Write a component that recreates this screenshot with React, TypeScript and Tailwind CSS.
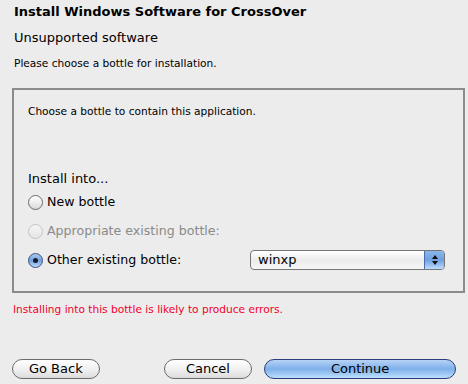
import React from "react";

function Radio({ checked, disabled }: { checked?: boolean; disabled?: boolean }) {
  return (
    <span
      className={
        "relative inline-flex h-[15px] w-[15px] shrink-0 items-center justify-center rounded-full border " +
        (disabled
          ? "border-[#c4c4c4] bg-gradient-to-b from-[#f6f6f6] to-[#e4e4e4]"
          : checked
          ? "border-[#3b4f80] bg-gradient-to-b from-[#a9c9ef] via-[#6fa3e0] to-[#b9d9f9]"
          : "border-[#6b6b6b] bg-gradient-to-b from-[#ffffff] via-[#eeeeee] to-[#d9d9d9]")
      }
    >
      {checked && <span className="h-[5px] w-[5px] rounded-full bg-[#1a1a2a]" />}
    </span>
  );
}

export default function App() {
  const font = { fontFamily: '"DejaVu Sans", "Liberation Sans", sans-serif' };
  return (
    <div className="h-[384px] w-[468px] overflow-hidden bg-[#ececec] text-black" style={font}>
      <div className="px-[14px] pt-[4px]">
        <div className="text-[13px] font-bold leading-[16px]">Install Windows Software for CrossOver</div>
        <div className="mt-[10px] text-[13px] leading-[16px]">Unsupported software</div>
        <div className="mt-[10px] text-[10.6px] leading-[14px]">Please choose a bottle for installation.</div>
      </div>
      <div className="ml-[12px] mt-[18px] h-[205px] w-[453px] border-2 border-[#8b8b8b] px-[14px]">
        <div className="mt-[14px] text-[10.6px] leading-[14px]">Choose a bottle to contain this application.</div>
        <div className="mt-[53px] text-[13px] leading-[16px]">Install into...</div>
        <div className="mt-[7px] flex items-center gap-[4px] text-[12.6px] leading-[16px]">
          <Radio />
          <span>New bottle</span>
        </div>
        <div className="mt-[13px] flex items-center gap-[4px] text-[12.6px] leading-[16px] text-[#8a8a8a]">
          <Radio disabled />
          <span>Appropriate existing bottle:</span>
        </div>
        <div className="mt-[11px] flex items-center text-[12.6px] leading-[16px]">
          <div className="flex w-[222px] items-center gap-[4px]">
            <Radio checked />
            <span>Other existing bottle:</span>
          </div>
          <div className="flex h-[20px] w-[195px] items-stretch overflow-hidden rounded-[4px] border border-[#767676] bg-gradient-to-b from-[#ffffff] via-[#ececec] to-[#f6f6f6]">
            <span className="flex-1 pl-[7px] text-[13px] leading-[18px]">winxp</span>
            <span className="flex w-[20px] flex-col items-center justify-center border-l border-[#4b6bb0] bg-gradient-to-b from-[#8ab6ea] via-[#6fa0de] to-[#bcdcfb]">
              <svg width="8" height="12" viewBox="0 0 8 12">
                <path d="M4 1 L7 5 L1 5 Z" fill="#111" />
                <path d="M4 11 L7 7 L1 7 Z" fill="#111" />
              </svg>
            </span>
          </div>
        </div>
      </div>
      <div className="ml-[13px] mt-[9px] text-[10.6px] leading-[14px] text-[#f3002a]">
        Installing into this bottle is likely to produce errors.
      </div>
      <div className="mt-[43px] flex items-center px-[12px]">
        <button className="h-[20px] w-[90px] rounded-full border border-[#6b6b6b] bg-gradient-to-b from-[#ffffff] via-[#f1f1f1] to-[#dcdcdc] text-[13px] leading-[18px]">
          Go Back
        </button>
        <button className="ml-[64px] h-[20px] w-[91px] rounded-full border border-[#6b6b6b] bg-gradient-to-b from-[#ffffff] via-[#f1f1f1] to-[#dcdcdc] text-[13px] leading-[18px]">
          Cancel
        </button>
        <button className="ml-[12px] h-[20px] w-[197px] rounded-full border border-[#2c3d7a] bg-gradient-to-b from-[#b6d3f5] via-[#7eb0ea] to-[#bde0fc] text-[13px] leading-[18px]">
          Continue
        </button>
      </div>
    </div>
  );
}
